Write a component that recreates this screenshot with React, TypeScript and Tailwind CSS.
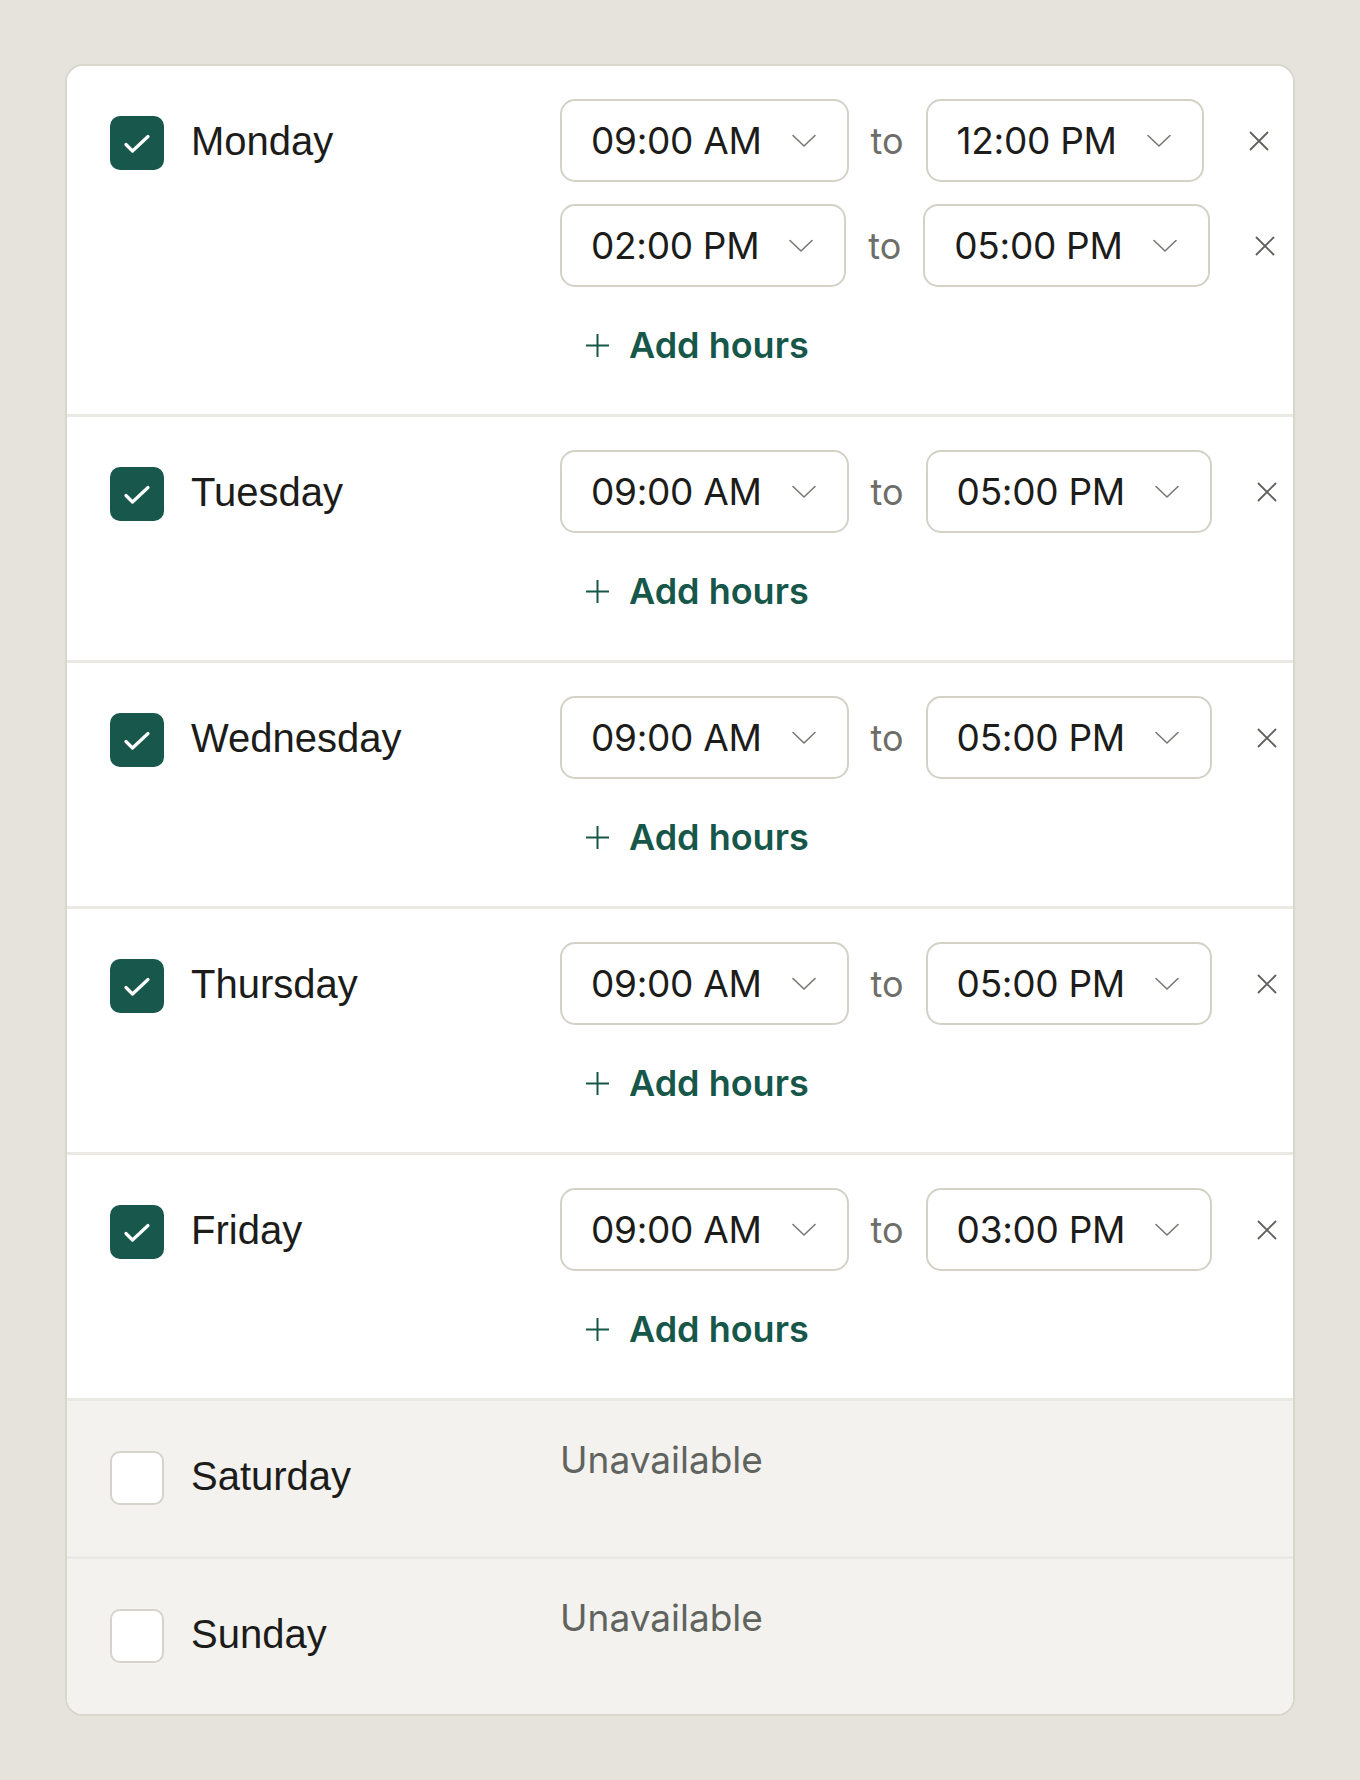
import { useState } from 'react'

type Slot = { from: string; to: string }
type Day = { name: string; slots: Slot[] }

const INITIAL: Day[] = [
  { name: 'Monday', slots: [{ from: '09:00 AM', to: '12:00 PM' }, { from: '02:00 PM', to: '05:00 PM' }] },
  { name: 'Tuesday', slots: [{ from: '09:00 AM', to: '05:00 PM' }] },
  { name: 'Wednesday', slots: [{ from: '09:00 AM', to: '05:00 PM' }] },
  { name: 'Thursday', slots: [{ from: '09:00 AM', to: '05:00 PM' }] },
  { name: 'Friday', slots: [{ from: '09:00 AM', to: '03:00 PM' }] },
  { name: 'Saturday', slots: [] },
  { name: 'Sunday', slots: [] },
]

function Checkbox({ checked }: { checked: boolean }) {
  return checked ? (
    <span className="w-[54px] h-[54px] rounded-[10px] bg-[#18574b] flex items-center justify-center flex-shrink-0">
      <svg width="54" height="54" viewBox="0 0 54 54" fill="none">
        <path d="M16 28.5 L22.5 35 L38 20.5" stroke="white" strokeWidth={3.2} strokeLinecap="round" strokeLinejoin="round" />
      </svg>
    </span>
  ) : (
    <span className="w-[54px] h-[54px] rounded-[10px] bg-white border-2 border-[#d5d3ca] flex-shrink-0" />
  )
}

function TimeSelect({ value }: { value: string }) {
  return (
    <button className="h-[83px] flex items-center gap-[30px] pl-[29px] pr-[31px] border-2 border-[#d4d1c7] rounded-[15px] bg-white text-[37px] text-[#1c1c1a] leading-none">
      <span className="tracking-[-0.3px]">{value}</span>
      <svg width="24" height="14" viewBox="0 0 24 14" fill="none">
        <path d="M1 1.5 L12 12 L23 1.5" stroke="#777a74" strokeWidth={1.6} strokeLinecap="round" strokeLinejoin="round" />
      </svg>
    </button>
  )
}

export default function App() {
  const [days] = useState(INITIAL)

  return (
    <div className="min-h-[1780px] bg-[#e6e3dc] pt-[64px] px-[65px] pb-[65px]">
      <div className="bg-white border-2 border-[#d9d6cc] rounded-[18px] overflow-hidden">
        {days.map((day, i) => {
          const on = day.slots.length > 0
          return (
            <div key={day.name}
              className={`flex ${i < days.length - 1 ? 'border-b-[3px] border-[#eae9e4]' : ''} ${on ? 'bg-white' : 'bg-[#f3f2ee]'}`}>

              {/* Day toggle */}
              <div className={`w-[493px] pl-[43px] flex items-start ${on ? 'pt-[50px]' : 'pt-[50px] pb-[51px]'}`}>
                <div className="flex items-center gap-[27px]">
                  <Checkbox checked={on} />
                  <span className="-mt-1 text-[40px] leading-[54px] text-[#1c1c1a] font-['Liberation_Sans',Arial,sans-serif]">{day.name}</span>
                </div>
              </div>

              {/* Hours */}
              <div className="flex-1 font-['Inter',sans-serif]">
                {on ? (
                  <div className="pt-[33px] pb-[47px]">
                    <div className="flex flex-col gap-[22px]">
                      {day.slots.map((s, j) => (
                        <div key={j} className="flex items-center gap-[22px]">
                          <TimeSelect value={s.from} />
                          <span className="text-[36px] text-[#6d6e69] leading-none">to</span>
                          <TimeSelect value={s.to} />
                          <button className="ml-[23px] w-[20px] h-[20px] flex items-center justify-center">
                            <svg width="20" height="20" viewBox="0 0 20 20" fill="none">
                              <path d="M1.5 1.5 L18.5 18.5 M18.5 1.5 L1.5 18.5" stroke="#5f615c" strokeWidth={1.8} strokeLinecap="round" />
                            </svg>
                          </button>
                        </div>
                      ))}
                    </div>
                    <button className="mt-[36px] ml-[25px] h-[44px] flex items-center gap-[19px] text-[36px] font-semibold text-[#17574a]">
                      <svg width="25" height="25" viewBox="0 0 25 25" fill="none">
                        <path d="M12.5 1 V24 M1 12.5 H24" stroke="#17574a" strokeWidth={2} />
                      </svg>
                      <span>Add hours</span>
                    </button>
                  </div>
                ) : (
                  <div className="pt-[31px] text-[37px] leading-[55px] text-[#60635e]">Unavailable</div>
                )}
              </div>
            </div>
          )
        })}
      </div>
    </div>
  )
}
